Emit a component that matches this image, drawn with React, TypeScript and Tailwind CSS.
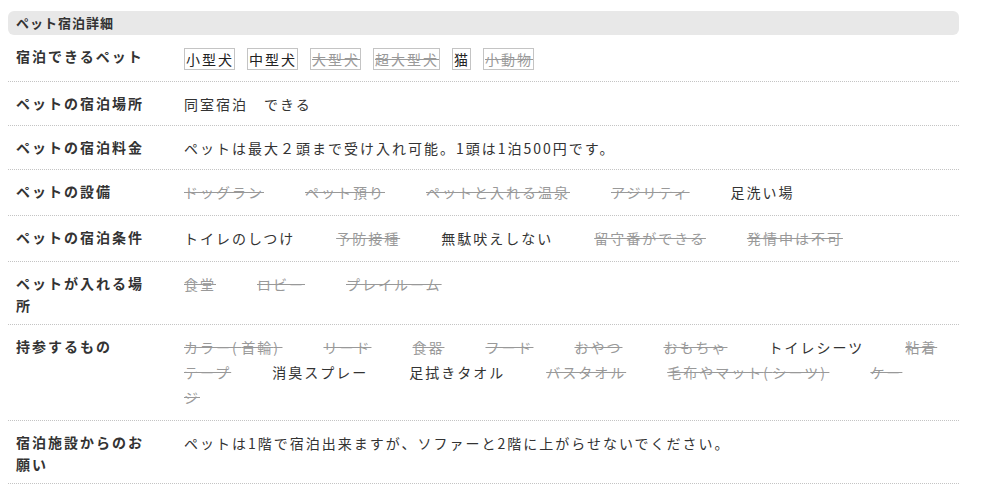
import * as React from 'react'
import { clsx } from 'clsx'

type Item = { text: string; ok: boolean }

interface Row {
  label: string
  tags?: Item[]
  items?: Item[]
  text?: string
}

const font = { fontFamily: '"Noto Sans CJK JP", "Noto Sans", sans-serif' }

const ok = (text: string): Item => ({ text, ok: true })
const ng = (text: string): Item => ({ text, ok: false })

const rows: Row[] = [
  {
    label: '宿泊できるペット',
    tags: [ok('小型犬'), ok('中型犬'), ng('大型犬'), ng('超大型犬'), ok('猫'), ng('小動物')],
  },
  { label: 'ペットの宿泊場所', text: '同室宿泊　できる' },
  { label: 'ペットの宿泊料金', text: 'ペットは最大２頭まで受け入れ可能。1頭は1泊500円です。' },
  {
    label: 'ペットの設備',
    items: [ng('ドッグラン'), ng('ペット預り'), ng('ペットと入れる温泉'), ng('アジリティ'), ok('足洗い場')],
  },
  {
    label: 'ペットの宿泊条件',
    items: [ok('トイレのしつけ'), ng('予防接種'), ok('無駄吠えしない'), ng('留守番ができる'), ng('発情中は不可')],
  },
  {
    label: 'ペットが入れる場所',
    items: [ng('食堂'), ng('ロビー'), ng('プレイルーム')],
  },
  {
    label: '持参するもの',
    items: [
      ng('カラー(首輪)'),
      ng('リード'),
      ng('食器'),
      ng('フード'),
      ng('おやつ'),
      ng('おもちゃ'),
      ok('トイレシーツ'),
      ng('粘着テープ'),
      ok('消臭スプレー'),
      ok('足拭きタオル'),
      ng('バスタオル'),
      ng('毛布やマット(シーツ)'),
      ng('ケージ'),
    ],
  },
  {
    label: '宿泊施設からのお願い',
    text: 'ペットは1階で宿泊出来ますが、ソファーと2階に上がらせないでください。',
  },
]

// parens are a bit wider in the original font
function withParens(text: string) {
  return text.split(/([()])/).map((part, i) =>
    part === '(' || part === ')' ? (
      <span key={i} className="tracking-[4.5px]">
        {part}
      </span>
    ) : (
      part
    ),
  )
}

function Value({ row }: { row: Row }) {
  if (row.tags) {
    return (
      <div className="leading-[28px]">
        {row.tags.map((t) => (
          <span
            key={t.text}
            className={clsx(
              'mr-3 inline-block border border-[#c4c4c4] pl-px leading-[20px]',
              t.ok ? 'text-[#222]' : 'text-[#999] line-through',
            )}
          >
            {t.text}
          </span>
        ))}
      </div>
    )
  }
  if (row.items) {
    return (
      <div className="pb-[2px] leading-[25px]">
        {row.items.map((t) => (
          <span
            key={t.text}
            className={clsx('mr-[41px]', t.ok ? 'text-[#333]' : 'text-[#999] line-through')}
          >
            {withParens(t.text)}
          </span>
        ))}
      </div>
    )
  }
  return <div className="leading-[25px] text-[#333]">{row.text}</div>
}

export default function App() {
  return (
    <div className="min-h-screen bg-white px-2 pt-[11px]" style={font}>
      <div className="w-[951px]">
        <div className="flex h-6 items-center rounded-md bg-[#e8e8e8] px-2 text-[13px] font-bold tracking-[1px] text-[#333]">
          ペット宿泊詳細
        </div>
        {rows.map((row) => (
          <div
            key={row.label}
            className="flex border-b border-dotted border-[#c4c4c4] pt-[10px] pb-[8px] text-[14px] tracking-[2px]"
          >
            <div className="w-[176px] shrink-0 pl-2 pr-10 font-bold leading-[22px] text-[#333]">
              {row.label}
            </div>
            <div className="min-w-0 flex-1 pr-[17px]">
              <Value row={row} />
            </div>
          </div>
        ))}
      </div>
    </div>
  )
}
